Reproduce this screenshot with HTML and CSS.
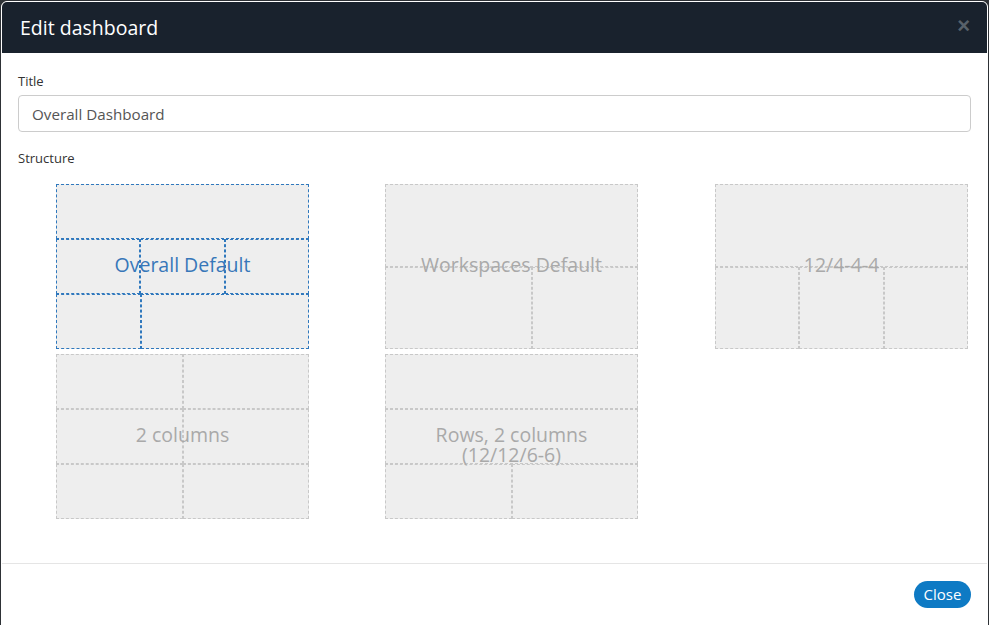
FILE: index.html
```html
<!DOCTYPE html>
<html>
<head>
<meta charset="utf-8">
<link rel="stylesheet" href="styles.css">
</head>
<body>
<div class="modal">
  <div class="modal-header">
    <h4 class="modal-title">Edit dashboard</h4>
    <span class="close">&times;</span>
  </div>
  <div class="modal-body">
    <label class="field-label">Title</label>
    <div class="input">Overall Dashboard</div>
    <label class="field-label structure-label">Structure</label>
    <div class="structures">
      <div class="slot">
        <div class="card active">
          <div class="row"><div class="cell"></div></div>
          <div class="row"><div class="cell"></div><div class="cell"></div><div class="cell"></div></div>
          <div class="row"><div class="cell c4"></div><div class="cell c8"></div></div>
          <div class="card-label">Overall Default</div>
        </div>
      </div>
      <div class="slot">
        <div class="card">
          <div class="row"><div class="cell"></div></div>
          <div class="row"><div class="cell c7"></div><div class="cell c5"></div></div>
          <div class="card-label">Workspaces Default</div>
        </div>
      </div>
      <div class="slot">
        <div class="card">
          <div class="row"><div class="cell"></div></div>
          <div class="row"><div class="cell"></div><div class="cell"></div><div class="cell"></div></div>
          <div class="card-label">12/4-4-4</div>
        </div>
      </div>
      <div class="slot">
        <div class="card">
          <div class="row"><div class="cell"></div><div class="cell"></div></div>
          <div class="row"><div class="cell"></div><div class="cell"></div></div>
          <div class="row"><div class="cell"></div><div class="cell"></div></div>
          <div class="card-label">2 columns</div>
        </div>
      </div>
      <div class="slot">
        <div class="card">
          <div class="row"><div class="cell"></div></div>
          <div class="row"><div class="cell"></div></div>
          <div class="row"><div class="cell"></div><div class="cell"></div></div>
          <div class="card-label">Rows, 2 columns (12/12/6-6)</div>
        </div>
      </div>
    </div>
  </div>
  <div class="modal-footer">
    <button class="btn-close">Close</button>
  </div>
</div>
</body>
</html>
```

FILE: styles.css
```css
html, body {
  margin: 0;
  padding: 0;
  height: 625px;
  overflow: hidden;
  background: #2e3236;
  font-family: "Open Sans", "Liberation Sans", sans-serif;
}
.modal {
  margin: 1px 1px 0 1px;
  height: 640px;
  background: #fff;
  border: 1px solid #fff;
  border-radius: 6px;
  overflow: hidden;
  box-sizing: border-box;
  display: flex;
  flex-direction: column;
}
.modal-header {
  height: 51px;
  background: #19222d;
  display: flex;
  align-items: center;
  justify-content: space-between;
  padding: 0 17px 0 18px;
  flex: none;
}
.modal-title {
  margin: 0;
  color: #fff;
  font-size: 19.5px;
  font-weight: 400;
  line-height: 24px;
}
.close {
  color: #58616a;
  font-size: 22px;
  font-weight: 700;
  line-height: 20px;
  margin-top: -4px;
  font-family: "Liberation Sans", sans-serif;
}
.modal-body {
  padding: 19px 16px 0 16px;
  height: 510px;
  box-sizing: border-box;
  flex: none;
}
.field-label {
  display: block;
  font-size: 13px;
  line-height: 18px;
  color: #333;
  margin-bottom: 5px;
}
.input {
  height: 37px;
  box-sizing: border-box;
  border: 1px solid #ccc;
  border-radius: 4px;
  padding: 1px 13px 0;
  font-size: 15.2px;
  line-height: 35px;
  color: #555;
}
.structure-label {
  margin-top: 17px;
  margin-bottom: 17px;
}
.structures {
  display: grid;
  grid-template-columns: 329px 330px 329px;
  row-gap: 5px;
  width: 988px;
}
.slot {
  display: flex;
  justify-content: flex-start;
  padding-left: 38px;
}
.card {
  position: relative;
  width: 253px;
  height: 165px;
  display: flex;
  flex-direction: column;
}
.row {
  display: flex;
  flex: 1 1 0;
}
.cell {
  flex: 1 1 0;
  background: #eee;
  border: 1px dashed #c8c8c8;
  box-sizing: border-box;
}
.card.active .cell {
  border-color: #2f78bd;
}
.c4 { flex: 4 1 0; }
.c8 { flex: 8 1 0; }
.c7 { flex: 7 1 0; }
.c5 { flex: 5 1 0; }
.card-label {
  position: absolute;
  left: 0;
  right: 0;
  top: 71px;
  padding: 0 16px;
  text-align: center;
  font-size: 19.5px;
  line-height: 20px;
  color: #a9a9a9;
}
.card.active .card-label {
  color: #3777b9;
}
.modal-footer {
  border-top: 1px solid #e5e5e5;
  padding: 17px 16px 0 0;
  display: flex;
  justify-content: flex-end;
  flex: none;
}
.btn-close {
  width: 57px;
  height: 27px;
  border: none;
  border-radius: 14px;
  background: #0e7ac4;
  color: #fff;
  font-family: "Open Sans", "Liberation Sans", sans-serif;
  font-size: 15px;
  padding: 0;
  line-height: 27px;
}
```
